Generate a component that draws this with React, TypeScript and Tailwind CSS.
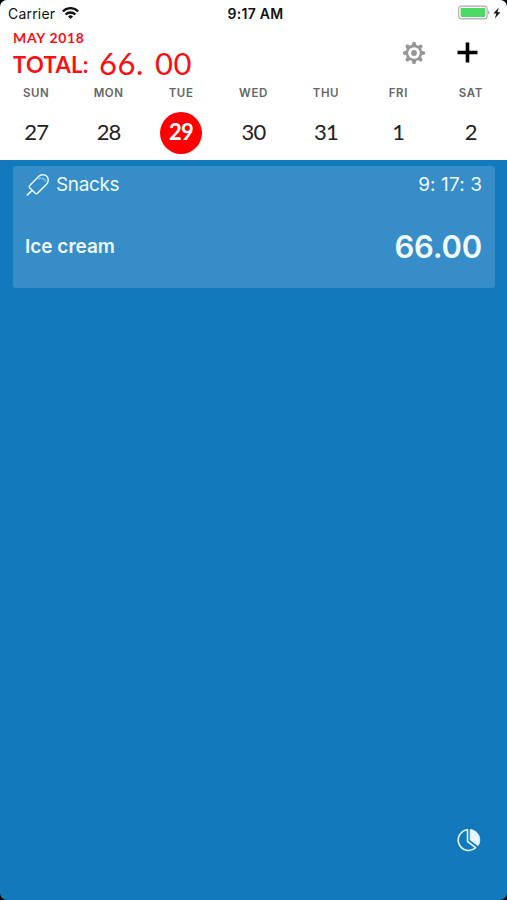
import { clsx } from 'clsx';

const days = [
  { name: 'SUN', date: 27 },
  { name: 'MON', date: 28 },
  { name: 'TUE', date: 29, selected: true },
  { name: 'WED', date: 30 },
  { name: 'THU', date: 31 },
  { name: 'FRI', date: 1 },
  { name: 'SAT', date: 2 },
];

function WifiIcon() {
  return (
    <svg className="w-[17px] h-3 mb-0.5" viewBox="0 0 17 12" fill="none" stroke="#111" strokeWidth="2.4">
      <path d="M.8 4.4a10.8 10.8 0 0 1 15.4 0" />
      <path d="M3.6 7.5a6.9 6.9 0 0 1 9.8 0" />
      <path d="M8.5 12 6 9.5a3.6 3.6 0 0 1 5 0z" fill="#111" stroke="none" />
    </svg>
  );
}

function BatteryIcon() {
  return (
    <svg className="w-11 h-4 mr-px mb-0.5" viewBox="0 0 44 16">
      <rect x=".7" y="1.1" width="28.4" height="12.8" rx="3" fill="none" stroke="#a9a9a9" strokeWidth="1.1" />
      <rect x="2.6" y="3" width="24.6" height="9" rx="1.3" fill="#4cd964" />
      <path d="M30.2 5.3c1.8.5 1.8 3.9 0 4.4z" fill="#a9a9a9" />
      <path d="M40.8 2.6 35.4 8.5h3l-1.6 5.1 5.7-6.3h-3.1z" fill="#111" />
    </svg>
  );
}

function GearIcon() {
  return (
    <svg className="w-6 h-6" viewBox="0 0 24 24" fill="none" stroke="#969696">
      <circle cx="12" cy="12" r="7" strokeWidth="2.3" />
      <circle cx="12" cy="12" r="2.9" fill="#969696" stroke="none" />
      {[0, 45, 90, 135, 180, 225, 270, 315].map((angle) => (
        <path
          key={angle}
          d="M9.4 5 10.7.9h2.6L14.6 5z"
          fill="#969696"
          stroke="none"
          transform={`rotate(${angle} 12 12)`}
        />
      ))}
    </svg>
  );
}

function PopsicleIcon() {
  return (
    <svg
      className="w-6 h-6 mb-0.5"
      viewBox="0 0 24 24"
      fill="none"
      stroke="#e6f6ff"
      strokeWidth="1.5"
      strokeLinecap="round"
      strokeLinejoin="round"
    >
      <path d="M5 12.2 13.6 3.5c2.2-2.1 6.1-2.3 8.2-.3 2 2.1 1.8 6-.3 8.1l-8.6 8.6c-1 1-2 1-2.9.1L5 15.1c-.9-.9-.9-2 0-2.9z" />
      <path d="M6.9 17.6 2.4 21.9" strokeWidth="1.7" />
      <path d="M13.3 5.3l1 .9.9-1.6 1.3 1.5 1.3-1.4 1 2 1.3-.3.2 1.8" strokeWidth=".8" opacity=".7" />
    </svg>
  );
}

function PieIcon() {
  return (
    <svg className="w-6 h-6" viewBox="0 0 24 24" fill="none" stroke="#e6f6ff" strokeWidth="1.6" strokeLinejoin="round">
      <path d="M10.5 1.7a10.4 10.4 0 1 0 8.2 18l-8.2-6.2z" />
      <path d="M13.2 1.5v10.4l7.9 5.8A10.5 10.5 0 0 0 13.2 1.5z" fill="#e6f6ff" strokeWidth=".8" />
    </svg>
  );
}

function StatusBar() {
  return (
    <div className="grid grid-cols-3 items-center h-7 pl-2 pr-1 font-['Inter',sans-serif] text-[14px] text-[#111]">
      <div className="flex items-center gap-[7px]">
        <span className="-mt-0.5 tracking-[0.2px]">Carrier</span>
        <WifiIcon />
      </div>
      <span className="-mt-px text-center font-semibold text-[14px] tracking-[0.3px]">9:17 AM</span>
      <div className="flex justify-end">
        <BatteryIcon />
      </div>
    </div>
  );
}

function Header() {
  return (
    <header className="h-[160px] bg-white">
      <StatusBar />
      <div className="flex justify-between h-[55px] pl-[13px] pr-[29px] text-[#fa1014] font-['Lato',sans-serif]">
        <div>
          <p className="h-5 leading-5 text-[14px] font-bold tracking-[0.65px]">MAY 2018</p>
          <div className="flex leading-[30px] whitespace-nowrap">
            <span className="w-[86px] pt-0.5 text-[22px] font-bold tracking-[0.3px]">TOTAL:</span>
            <span className="w-[56px] text-[31px] tracking-[0.5px]">66.</span>
            <span className="text-[31px] tracking-[0.5px]">00</span>
          </div>
        </div>
        <div className="flex items-center h-[49px] gap-[31px]">
          <button aria-label="Settings">
            <GearIcon />
          </button>
          <button aria-label="Add expense">
            <svg className="w-[21px] h-[21px]" viewBox="0 0 21 21" stroke="#000" strokeWidth="3.6">
              <path d="M10.5.5v20M.5 10.5h20" />
            </svg>
          </button>
        </div>
      </div>
      <div className="grid grid-cols-7">
        {days.map((day) => (
          <div key={day.name} className="flex flex-col items-center">
            <span className="h-5 leading-5 font-['Inter',sans-serif] text-[11.5px] font-semibold tracking-[0.6px] text-[#666]">
              {day.name}
            </span>
            <span
              className={clsx(
                "flex items-center justify-center w-[42px] h-[42px] mt-[9px] pb-[3px] rounded-full font-['Lato',sans-serif] text-[22px] tracking-[-0.8px]",
                day.selected ? 'bg-[#fe0000] text-white font-bold' : 'text-[#222]'
              )}
            >
              {day.date}
            </span>
          </div>
        ))}
      </div>
    </header>
  );
}

function ExpenseCard() {
  return (
    <section className="h-[122px] rounded-[3px] bg-[#368dc7] font-['Inter',sans-serif] text-[#f0faff]">
      <div className="flex items-center justify-between h-[38px] pt-0.5 pl-3 pr-[13px] text-[19px] border-b border-[#4389bd]">
        <div className="flex items-center gap-[7px]">
          <PopsicleIcon />
          <span className="tracking-[-0.35px]">Snacks</span>
        </div>
        <span className="tracking-[0.1px]">9: 17: 3</span>
      </div>
      <div className="flex items-center justify-between h-[84px] pt-0.5 pl-3 pr-[13px]">
        <span className="text-[19px] font-semibold">Ice cream</span>
        <span className="text-[31px] font-semibold tracking-[-0.2px]">66.00</span>
      </div>
    </section>
  );
}

export default function App() {
  return (
    <div className="w-full h-[900px] bg-black overflow-hidden">
      <div className="flex flex-col h-full rounded-[7px] overflow-hidden bg-[#1379bd]">
        <Header />
        <main className="flex flex-col flex-1 justify-between pt-1.5 pl-[13px] pr-3 pb-12">
          <ExpenseCard />
          <button aria-label="Statistics" className="self-end mr-3.5">
            <PieIcon />
          </button>
        </main>
      </div>
    </div>
  );
}
